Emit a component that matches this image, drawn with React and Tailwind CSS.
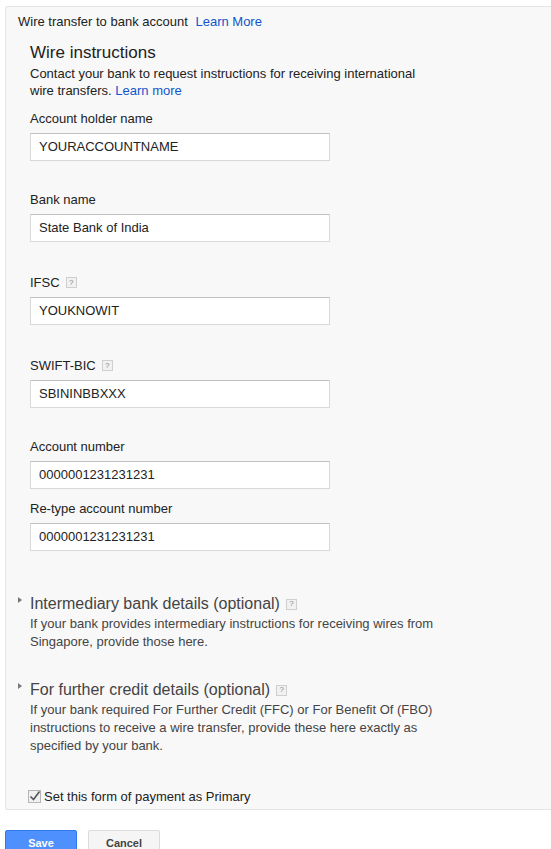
import React from "react";

const Help = () => (
  <span className="ml-[6px] inline-flex h-[11px] w-[11px] items-center justify-center border border-[#cfcfcf] bg-[#f1f1f1] text-[8px] leading-none text-[#888]">
    ?
  </span>
);

const Field = ({ label, value, help, className }) => (
  <div className={className}>
    <div className="flex items-center h-[17px] leading-[17px] text-[#222]">
      {label}
      {help && <Help />}
    </div>
    <div className="mt-[6px] flex h-[28px] w-[300px] items-center border border-[#d9d9d9] border-t-[#c0c0c0] bg-white pl-[8px] text-[#222]">
      {value}
    </div>
  </div>
);

const Optional = ({ title, lines, className }) => (
  <div className={className}>
    <div className="flex items-center h-[20px]">
      <span className="ml-[-12px] mr-[4px] mb-[8px] h-0 w-0 border-y-[3px] border-l-[4px] border-y-transparent border-l-[#777]" />
      <span className="ml-[4px] text-[16px] leading-[20px] text-[#444]">{title}</span>
      <Help />
    </div>
    <div className="mt-[1px] text-[#444] leading-[18px]">
      {lines.map((l) => (
        <div key={l}>{l}</div>
      ))}
    </div>
  </div>
);

export default function App() {
  return (
    <div className="overflow-hidden bg-white font-['Arial','Liberation_Sans',sans-serif] text-[13px]">
      <div className="ml-[5px] mt-[6px] w-[560px] rounded-[2px] border border-[#e5e5e5] bg-[#f8f8f8] pb-[4px]">
        <div className="pl-[12px] pt-[6px] leading-[17px] text-[#222]">
          Wire transfer to bank account{" "}
          <span className="ml-[4px] text-[#15c]">Learn More</span>
        </div>
        <div className="pl-[24px]">
          <div className="mt-[13px] text-[17px] leading-[20px] text-[#222]">Wire instructions</div>
          <div className="mt-[2px] w-[400px] leading-[17px] text-[#222]">
            Contact your bank to request instructions for receiving international wire transfers.{" "}
            <span className="text-[#15c]">Learn more</span>
          </div>
          <Field className="mt-[11px]" label="Account holder name" value="YOURACCOUNTNAME" />
          <Field className="mt-[30px]" label="Bank name" value="State Bank of India" />
          <Field className="mt-[32px]" label="IFSC" value="YOUKNOWIT" help />
          <Field className="mt-[32px]" label="SWIFT-BIC" value="SBININBBXXX" help />
          <Field className="mt-[30px]" label="Account number" value="0000001231231231" />
          <Field className="mt-[11px]" label="Re-type account number" value="0000001231231231" />
          <Optional
            className="mt-[43px]"
            title="Intermediary bank details (optional)"
            lines={[
              "If your bank provides intermediary instructions for receiving wires from",
              "Singapore, provide those here.",
            ]}
          />
          <Optional
            className="mt-[29px]"
            title="For further credit details (optional)"
            lines={[
              "If your bank required For Further Credit (FFC) or For Benefit Of (FBO)",
              "instructions to receive a wire transfer, provide these here exactly as",
              "specified by your bank.",
            ]}
          />
          <div className="mt-[33px] ml-[-2px] flex h-[17px] items-center text-[#222]">
            <svg width="13" height="13" viewBox="0 0 13 13" className="mr-[3px]">
              <rect x="0.5" y="0.5" width="12" height="12" fill="#f0f0f0" stroke="#b5b5b5" />
              <path d="M2.5 6.5 L5.5 9.5 L11.5 1.5" fill="none" stroke="#555" strokeWidth="1.6" />
            </svg>
            Set this form of payment as Primary
          </div>
        </div>
      </div>
      <div className="ml-[5px] mt-[20px] flex gap-[11px] pb-[10px]">
        <button className="h-[27px] w-[72px] rounded-[2px] border border-[#3079ed] bg-[#4d90fe] text-[11px] font-bold text-white">
          Save
        </button>
        <button className="h-[27px] w-[72px] rounded-[2px] border border-[#dcdcdc] bg-[#f5f5f5] text-[11px] font-bold text-[#444]">
          Cancel
        </button>
      </div>
    </div>
  );
}
